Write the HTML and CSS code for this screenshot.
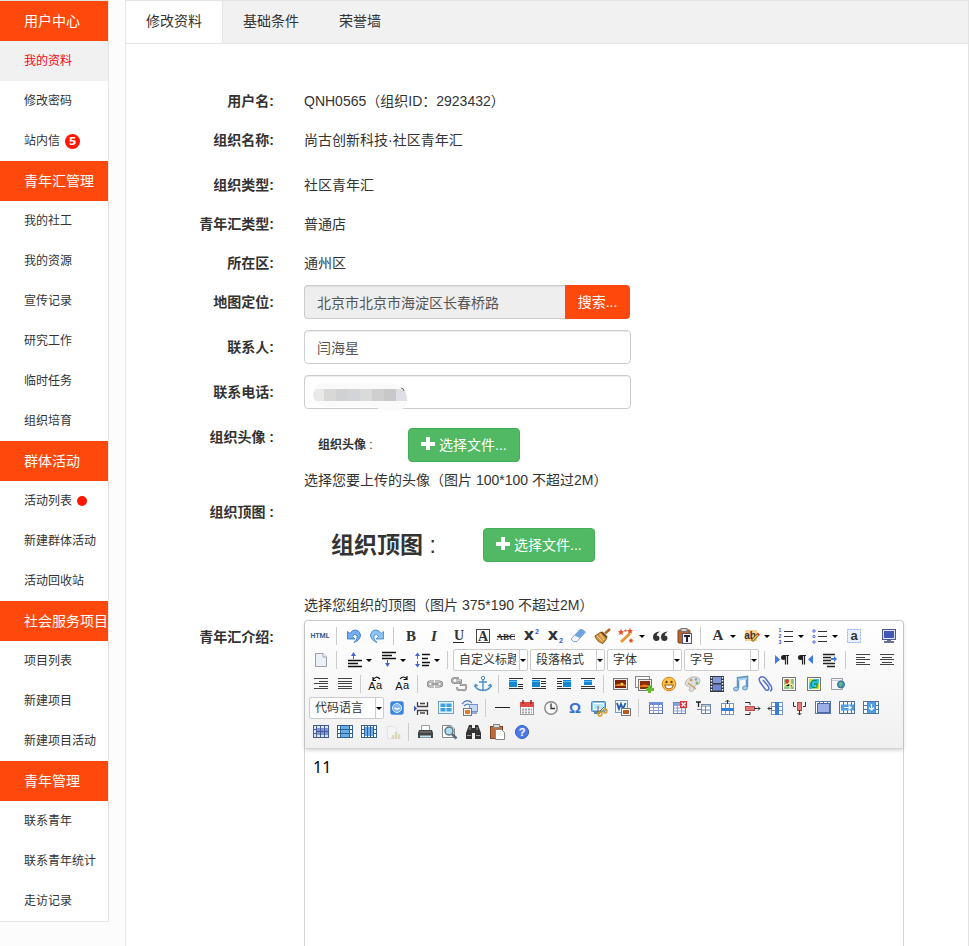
FILE: index.html
```
<!DOCTYPE html>
<html lang="zh-CN">
<head>
    <meta charset="UTF-8">
    <meta name="viewport" content="width=device-width, initial-scale=1.0">
    <title>用户中心 - 修改资料</title>
    <link rel="stylesheet" href="styles.css">
</head>
<body>
    <nav class="sidebar">
        <h2>用户中心</h2>
        <a href="#" class="active">我的资料</a>
        <a href="#">修改密码</a>
        <a href="#">站内信<span class="badge">5</span></a>
        <h2>青年汇管理</h2>
        <a href="#">我的社工</a>
        <a href="#">我的资源</a>
        <a href="#">宣传记录</a>
        <a href="#">研究工作</a>
        <a href="#">临时任务</a>
        <a href="#">组织培育</a>
        <h2>群体活动</h2>
        <a href="#">活动列表<span class="dot"></span></a>
        <a href="#">新建群体活动</a>
        <a href="#">活动回收站</a>
        <h2>社会服务项目</h2>
        <a href="#">项目列表</a>
        <a href="#">新建项目</a>
        <a href="#">新建项目活动</a>
        <h2>青年管理</h2>
        <a href="#">联系青年</a>
        <a href="#">联系青年统计</a>
        <a href="#">走访记录</a>
    </nav>

    <main class="panel">
        <div class="tabs">
            <a href="#" class="tab current">修改资料</a>
            <a href="#" class="tab">基础条件</a>
            <a href="#" class="tab">荣誉墙</a>
        </div>

        <form class="profile-form">
            <div class="row">
                <span class="label">用户名:</span>
                <div class="value">QNH0565（组织ID：2923432）</div>
            </div>
            <div class="row tall">
                <span class="label">组织名称:</span>
                <div class="value">尚古创新科技·社区青年汇</div>
            </div>
            <div class="row">
                <span class="label">组织类型:</span>
                <div class="value">社区青年汇</div>
            </div>
            <div class="row">
                <span class="label">青年汇类型:</span>
                <div class="value">普通店</div>
            </div>
            <div class="row">
                <span class="label">所在区:</span>
                <div class="value">通州区</div>
            </div>
            <div class="row">
                <label class="label" for="address">地图定位:</label>
                <div class="field input-group">
                    <input type="text" id="address" class="text-input" value="北京市北京市海淀区长春桥路" readonly>
                    <button type="button" class="btn-search">搜索...</button>
                </div>
            </div>
            <div class="row">
                <label class="label" for="contact">联系人:</label>
                <div class="field"><input type="text" id="contact" class="text-input" value="闫海星"></div>
            </div>
            <div class="row">
                <label class="label" for="phone">联系电话:</label>
                <div class="field">
                    <input type="text" id="phone" class="text-input">
                    <svg class="phone-mask" width="96" height="30" viewBox="0 0 96 30">
                        <path d="M9 1H72Q92 1 95 15Q95 29 80 29Q68 29 62 25H14Q0 22 0 12Q1 2 9 1Z" fill="#fafafa"/>
                        <path d="M3 7H11V19H3Q-3 13 3 7Z" fill="#e9e9e9"/>
                        <path d="M11 7H23V19H11Z" fill="#d8d8d7"/>
                        <path d="M23 7H35V19H23Z" fill="#d0d1d2"/>
                        <path d="M35 7H47V19H35Z" fill="#d3d4d7"/>
                        <path d="M47 7H59V19H47Z" fill="#dadada"/>
                        <path d="M59 7H71V19H59Z" fill="#cfcfcf"/>
                        <path d="M71 7H83V19H71Z" fill="#c8c8c8"/>
                        <path d="M83 7H91Q94 12 94 19H83Z" fill="#dedfe2"/>
                        <path d="M88 6Q91 6 91 9" fill="none" stroke="#667788"/>
                    </svg>
                </div>
            </div>
            <div class="row upload">
                <span class="label">组织头像 :</span>
                <div class="content">
                    <div class="picker">
                        <div class="preview avatar-preview">组织头像<span> :</span></div>
                        <button type="button" class="btn-file"><svg width="14" height="14" viewBox="0 0 14 14"><path d="M5 0h4v5h5v4H9v4H5V9H0V5h5z" fill="#fff"/></svg>选择文件...</button>
                    </div>
                    <div class="hint">选择您要上传的头像（图片 100*100 不超过2M）</div>
                </div>
            </div>
            <div class="row upload">
                <span class="label">组织顶图 :</span>
                <div class="content">
                    <div class="picker">
                        <div class="preview banner-preview">组织顶图<span> :</span></div>
                        <button type="button" class="btn-file"><svg width="14" height="14" viewBox="0 0 14 14"><path d="M5 0h4v5h5v4H9v4H5V9H0V5h5z" fill="#fff"/></svg>选择文件...</button>
                    </div>
                    <div class="hint">选择您组织的顶图（图片 375*190 不超过2M）</div>
                </div>
            </div>
            <div class="row intro">
                <label class="label" for="intro">青年汇介绍:</label>
                <div class="editor">
                    <div class="toolbar">
                        <div class="tool-row">
                            <button type="button" title="源代码"><svg viewBox="0 0 20 20"><text x="10" y="12" class="t-html">HTML</text></svg></button>
                            <i class="sep"></i>
                            <button type="button" title="撤销"><svg viewBox="0 0 20 20"><path d="M4.500 5.500V13H12L9.500 10.500Q11.500 7.500 13.500 9Q15.500 12 11 16.500Q17.500 14 17.500 9Q16.500 4 12 4Q9 4 7 7.500Z" fill="#72aef0" stroke="#2f70c0" stroke-width=".8"/></svg></button>
                            <button type="button" title="重做"><svg viewBox="0 0 20 20"><path d="M16.500 5.500V13H9L11.500 10.500Q9.500 7.500 7.500 9Q5.500 12 10 16.500Q3.500 14 3.500 9Q4.500 4 9 4Q12 4 14 7.500Z" fill="#8cc4f4" stroke="#3a80c8" stroke-width=".8"/></svg></button>
                            <i class="sep"></i>
                            <button type="button" title="加粗"><svg viewBox="0 0 20 20"><text x="11" y="15" class="t-serif">B</text></svg></button>
                            <button type="button" title="斜体"><svg viewBox="0 0 20 20"><text x="10" y="15" class="t-serif t-italic">I</text></svg></button>
                            <button type="button" title="下划线"><svg viewBox="0 0 20 20"><text x="11" y="14" class="t-serif t-mid">U</text><path d="M5 16.500H16" stroke="#222"/></svg></button>
                            <button type="button" title="字符边框"><svg viewBox="0 0 20 20"><rect x="4.500" y="3.500" width="13" height="13" fill="none" stroke="#444"/><text x="11" y="15" class="t-serif t-mid">A</text></svg></button>
                            <button type="button" title="删除线"><svg viewBox="0 0 20 20"><text x="10" y="14" class="t-abc">ABC</text><path d="M1 10.500H19" stroke="#222"/></svg></button>
                            <button type="button" title="上标"><svg viewBox="0 0 20 20"><text x="9" y="14" class="t-x">x</text><text x="17" y="8" class="t-num">2</text></svg></button>
                            <button type="button" title="下标"><svg viewBox="0 0 20 20"><text x="9" y="14" class="t-x">x</text><text x="17" y="17" class="t-num">2</text></svg></button>
                            <button type="button" title="清除格式"><svg viewBox="0 0 20 20"><path d="M3 13L12 3.500Q14 2.500 17.500 6L9 15.500Q5 17 3 13Z" fill="#f4f8fd" stroke="#88a6cb"/><path d="M6.500 9.500L12 3.500Q14 2.500 17.500 6L12 12Z" fill="#6ea2e4"/></svg></button>
                            <button type="button" title="格式刷"><svg viewBox="0 0 20 20"><path d="M18 3L13 7.500" stroke="#b06b20" stroke-width="2.500"/><path d="M9 6L15 12L11 17.500Q5 16 3 10Z" fill="#d89642" stroke="#8e5518"/><path d="M5 10L10 15M8 8L12 14" stroke="#f7d38e"/><path d="M9.500 6L15 11.500" stroke="#6b4b22" stroke-width="2"/></svg></button>
                            <button type="button" class="wide" title="自动排版"><svg viewBox="0 0 20 20"><path d="M5 16L14 7.500" stroke="#e39a36" stroke-width="3"/><path d="M5 3l1 2 2 .5-1.500 1.500.5 2-2-1-2 1 .5-2L2 5.500 4 5zM14 2l1 2 2 .3-1.500 1.400.4 2-1.900-1-1.900 1 .4-2L11 4.300l2-.3zM15 12l.8 1.600 1.700.3-1.200 1.200.2 1.900-1.500-.9-1.500.9.2-1.900-1.200-1.200 1.700-.3zM9.500 3l.5 1 1 .2-.7.800.1 1.100-.9-.5-1 .5.200-1.100-.8-.8 1.100-.2z" fill="#e8502b"/></svg><b class="caret"></b></button>
                            <button type="button" title="引用"><svg viewBox="0 0 20 20"><path d="M10 5.500Q3 6 3 11Q3 15 6.500 15Q9.500 15 9.500 12Q9.500 9.500 6.500 9.500Q7 7 10 5.500ZM18 5.500Q11 6 11 11Q11 15 14.500 15Q17.500 15 17.500 12Q17.500 9.500 14.500 9.500Q15 7 18 5.500Z" fill="#333"/></svg></button>
                            <button type="button" title="纯文本粘贴"><svg viewBox="0 0 20 20"><rect x="4" y="4" width="12" height="13" rx="1" fill="#b5662d" stroke="#7c421b"/><rect x="7" y="2.500" width="6" height="3" fill="#d5d5d5" stroke="#777"/><rect x="8.500" y="7.500" width="9" height="10" fill="#f3f6fa" stroke="#557"/><path d="M10 10H16M13 10V16" stroke="#223" stroke-width="2"/></svg></button>
                            <i class="sep"></i>
                            <button type="button" class="wide" title="字体颜色"><svg viewBox="0 0 20 20"><text x="11" y="14" class="t-serif">A</text></svg><b class="caret"></b></button>
                            <button type="button" class="wide" title="背景色"><svg viewBox="0 0 20 20"><rect x="4" y="4" width="12" height="11" fill="#ffd08a"/><text x="9" y="13" class="t-ab">ab</text><path d="M11 15L17.500 8" stroke="#6a542d" stroke-width="3"/><path d="M11.500 14.500L17 8.500" stroke="#f5ca4c" stroke-width="1.500"/><path d="M16.500 9L18 7.500" stroke="#dc4a3a" stroke-width="3"/></svg><b class="caret"></b></button>
                            <button type="button" class="wide" title="有序列表"><svg viewBox="0 0 20 20"><path d="M9 5.500H18M9 10.500H18M9 15.500H18" stroke="#333"/><text x="5" y="6" class="t-list">1</text><text x="5" y="12" class="t-list">2</text><text x="5" y="18" class="t-list">3</text></svg><b class="caret"></b></button>
                            <button type="button" class="wide" title="无序列表"><svg viewBox="0 0 20 20"><path d="M9 5.500H18M9 10.500H18M9 15.500H18" stroke="#333"/><g fill="#fff" stroke="#4a62e0"><circle cx="5" cy="5" r="1.200"/><circle cx="5" cy="10.500" r="1.200"/><circle cx="5" cy="16" r="1.200"/></g></svg><b class="caret"></b></button>
                            <button type="button" title="全选"><svg viewBox="0 0 20 20"><rect x="4.500" y="3.500" width="13" height="13" fill="#e9f1ff" stroke="#8aaefb" stroke-dasharray="2 1"/><text x="11" y="14" class="t-a">a</text></svg></button>
                            <button type="button" class="push" title="全屏"><svg viewBox="0 0 20 20"><rect x="3.500" y="3.500" width="13" height="10" fill="#dfe4f2" stroke="#4d5789"/><rect x="5" y="5" width="10" height="7" fill="#3f57b5"/><path d="M8 14H12V15H15V17H5V15H8Z" fill="#687197"/></svg></button>
                        </div>
                        <div class="tool-row">
                            <button type="button" title="清空文档"><svg viewBox="0 0 20 20"><path d="M5.500 3.500H13L16.500 7V16.500H5.500Z" fill="#edf0f6" stroke="#9aa1ad"/><path d="M13 3.500V7H16.500" fill="#fff" stroke="#9aa1ad"/></svg></button>
                            <i class="sep"></i>
                            <button type="button" class="wide" title="段前距"><svg viewBox="0 0 20 20"><path d="M5 10.500H19M5 13.500H15M5 16.500H19" stroke="#111" stroke-width="1.300"/><path d="M10.500 9V4" stroke="#4464c8"/><path d="M8 6L10.500 2L13 6Z" fill="#4464c8"/></svg><b class="caret"></b></button>
                            <button type="button" class="wide" title="段后距"><svg viewBox="0 0 20 20"><path d="M5 2.500H19M5 5.500H15M5 8.500H19" stroke="#111" stroke-width="1.300"/><path d="M10.500 10V14" stroke="#4464c8"/><path d="M8 13L10.500 17L13 13Z" fill="#4464c8"/></svg><b class="caret"></b></button>
                            <button type="button" class="wide" title="行间距"><svg viewBox="0 0 20 20"><path d="M11 4.500H19M11 8.500H17M11 12.500H19M11 15.500H18" stroke="#111" stroke-width="1.300"/><path d="M6.500 5V15" stroke="#4464c8" stroke-dasharray="4 2"/><path d="M4 6L6.500 2.500L9 6ZM4 14L6.500 17.500L9 14Z" fill="#4464c8"/></svg><b class="caret"></b></button>
                            <i class="sep"></i>
                            <span class="combo"><select aria-label="自定义标题"><option>自定义标题</option></select></span>
                            <span class="combo"><select aria-label="段落格式"><option>段落格式</option></select></span>
                            <span class="combo"><select aria-label="字体"><option>字体</option></select></span>
                            <span class="combo"><select aria-label="字号"><option>字号</option></select></span>
                            <i class="sep"></i>
                            <button type="button" title="从左向右"><svg viewBox="0 0 20 20"><path d="M4 5L9 9.500L4 14Z" fill="#3f78e8"/><path d="M18 5.500H13M14.500 6V14.500M16.500 6V14.500" stroke="#222" stroke-width="1.200"/><circle cx="12.500" cy="7.500" r="2.500" fill="#222"/></svg></button>
                            <button type="button" title="从右向左"><svg viewBox="0 0 20 20"><path d="M18 5L13 9.500L18 14Z" fill="#3f78e8"/><path d="M11 5.500H6M7.500 6V14.500M9.500 6V14.500" stroke="#222" stroke-width="1.200"/><circle cx="5.500" cy="7.500" r="2.500" fill="#222"/></svg></button>
                            <button type="button" title="首行缩进"><svg viewBox="0 0 20 20"><path d="M4 4.500H16M4 7.500H12M4 10.500H12M4 13.500H16M8 16.500H16" stroke="#222" stroke-width="1.500"/><path d="M12 9H16" stroke="#3f78e8" stroke-width="2"/><path d="M15 6L18 9L15 12Z" fill="#3f78e8"/></svg></button>
                            <i class="sep"></i>
                            <button type="button" title="居左对齐"><svg viewBox="0 0 20 20"><path d="M4 4.500H18M4 7.500H13M4 9.500H18M4 12.500H13M4 14.500H18" stroke="#444"/></svg></button>
                            <button type="button" title="居中对齐"><svg viewBox="0 0 20 20"><path d="M4 4.500H18M6 7.500H16M4 9.500H18M6 12.500H16M4 14.500H18" stroke="#444"/></svg></button>
                        </div>
                        <div class="tool-row">
                            <button type="button" title="居右对齐"><svg viewBox="0 0 20 20"><path d="M4 4.500H18M9 7.500H18M4 9.500H18M9 12.500H18M4 14.500H18" stroke="#444"/></svg></button>
                            <button type="button" title="两端对齐"><svg viewBox="0 0 20 20"><path d="M4 4.500H18M4 7.500H18M4 9.500H18M4 12.500H18M4 14.500H18" stroke="#444"/></svg></button>
                            <i class="sep"></i>
                            <button type="button" title="字母大写"><svg viewBox="0 0 20 20"><text x="5" y="16" class="t-case">A</text><text x="12" y="15" class="t-case">a</text><path d="M6 6Q9 1 13 5M6 3V6.500H9" fill="none" stroke="#111" stroke-width="1.200"/></svg></button>
                            <button type="button" title="字母小写"><svg viewBox="0 0 20 20"><text x="8" y="16" class="t-case">A</text><text x="15" y="15" class="t-case">a</text><path d="M9 5Q12 1 16 5M16 2V5.500H12.500" fill="none" stroke="#111" stroke-width="1.200"/></svg></button>
                            <i class="sep"></i>
                            <button type="button" title="超链接"><svg viewBox="0 0 20 20"><g fill="none"><path d="M10 7.500H6Q4 7.500 4 10T6 12.500H10M11 7.500H15Q18 7.500 18 10T15 12.500H11M7.500 10H14.500" stroke="#777" stroke-width="2.200"/><path d="M10 7.500H6Q4 7.500 4 10T6 12.500H10M11 7.500H15Q18 7.500 18 10T15 12.500H11M7.500 10H14.500" stroke="#ddd" stroke-width=".8"/></g></svg></button>
                            <button type="button" title="取消链接"><svg viewBox="0 0 20 20"><g fill="none"><path d="M11 4H7Q4 4 4 6.500T7 9H11V7M8 6.500H13V11H17Q18.500 11 18 14T15 16H11Q9 16 9 13" stroke="#777" stroke-width="2"/><path d="M11 4H7Q4 4 4 6.500T7 9H11V7M8 6.500H13V11H17Q18.500 11 18 14T15 16H11Q9 16 9 13" stroke="#eee" stroke-width=".7"/></g></svg></button>
                            <button type="button" title="锚点"><svg viewBox="0 0 20 20"><path d="M11 6V17M7 8H15M3 11Q4 16 11 16.500Q18 16 19 11M2.500 13L3.500 10.500L6 12M16 12L18.500 10.500L19.500 13" fill="none" stroke="#4e8fc7" stroke-width="1.400"/><circle cx="11" cy="4" r="1.700" fill="#fff" stroke="#4e8fc7"/></svg></button>
                            <i class="sep"></i>
                            <button type="button" title="默认"><svg viewBox="0 0 20 20"><path d="M4 4.500H18M13 10.500H18M13 12.500H18M4 14.500H18" stroke="#333"/><rect x="4" y="6" width="8" height="7" fill="#1586d2"/><path d="M4 7.500H12" stroke="#52bdf3"/></svg></button>
                            <button type="button" title="左浮动"><svg viewBox="0 0 20 20"><path d="M3 4.500H17M12 7.500H17M12 9.500H17M12 12.500H17M3 14.500H17" stroke="#333"/><rect x="3" y="6" width="8" height="7" fill="#1586d2"/><path d="M3 7.500H11" stroke="#52bdf3"/></svg></button>
                            <button type="button" title="右浮动"><svg viewBox="0 0 20 20"><path d="M4 4.500H18M4 7.500H9M4 9.500H9M4 12.500H9M4 14.500H18" stroke="#333"/><rect x="10" y="6" width="8" height="7" fill="#1586d2"/><path d="M10 7.500H18" stroke="#52bdf3"/></svg></button>
                            <button type="button" title="居中"><svg viewBox="0 0 20 20"><path d="M4 4.500H18M4 12.500H18M4 14.500H18" stroke="#333"/><rect x="7" y="6" width="8" height="5" fill="#1586d2"/><path d="M7 7.500H15" stroke="#52bdf3"/></svg></button>
                            <i class="sep"></i>
                            <button type="button" title="单图上传"><svg viewBox="0 0 20 20"><rect x="3.500" y="4.500" width="14" height="11" fill="#eee" stroke="#777"/><rect x="5" y="6" width="11" height="8" fill="#7a2206"/><path d="M5 11Q10 8 16 11V12H5Z" fill="#ee7917"/><circle cx="12" cy="10" r="1.300" fill="#ffe06c"/></svg></button>
                            <button type="button" title="多图上传"><svg viewBox="0 0 20 20"><rect x="1.500" y="2.500" width="14" height="11" fill="#fff" stroke="#888"/><rect x="4.500" y="5.500" width="13" height="11" fill="#eee" stroke="#777"/><rect x="6" y="7" width="10" height="8" fill="#8a2d0b"/><path d="M6 12Q10 9 16 12V13H6Z" fill="#ee7917"/><path d="M14 11.500h3v2.500h3v3h-3v2h-3v-2h-2v-3h2z" fill="#69b933"/></svg></button>
                            <button type="button" title="表情"><svg viewBox="0 0 20 20"><circle cx="11" cy="10" r="6.800" fill="#ffc545" stroke="#dc8122"/><circle cx="8.500" cy="8" r="1.200" fill="#69401a"/><circle cx="13.500" cy="8" r="1.200" fill="#69401a"/><path d="M6.500 11H15.500Q14.500 15 11 15T6.500 11Z" fill="#fff" stroke="#a35c1a"/></svg></button>
                            <button type="button" title="涂鸦"><svg viewBox="0 0 20 20"><path d="M10 3Q18 2 18 7Q18 11 14 11Q12 12 12 16Q8 19 7 16Q9 12 5 12Q2 11 4 7Q6 4 10 3Z" fill="#e0dedb" stroke="#bbb"/><circle cx="9" cy="6" r="1.300" fill="#d98b4a"/><circle cx="14" cy="5.500" r="1.300" fill="#68a9d4"/><circle cx="15" cy="9" r="1.300" fill="#78b25b"/><path d="M6 9L14 15" stroke="#c6a06a" stroke-width="1.500"/></svg></button>
                            <button type="button" title="视频"><svg viewBox="0 0 20 20"><rect x="4" y="2" width="14" height="16" fill="#333945"/><rect x="7" y="3" width="8" height="6" fill="#8398d8"/><rect x="7" y="10.500" width="8" height="6" fill="#6f88d0"/><path d="M5.500 3V18M16.500 3V18" stroke="#fff" stroke-width="1.500" stroke-dasharray="1.500 1.500"/></svg></button>
                            <button type="button" title="音乐"><svg viewBox="0 0 20 20"><path d="M8 14V4L17 3V13" fill="none" stroke="#6196c5" stroke-width="2.500"/><path d="M8 5.500L17 4.500" stroke="#a9d5f2" stroke-width="2"/><ellipse cx="6" cy="15" rx="2.500" ry="2" fill="#a6cff0" stroke="#6196c5"/><ellipse cx="15" cy="14" rx="2.500" ry="2" fill="#a6cff0" stroke="#6196c5"/></svg></button>
                            <button type="button" title="附件"><svg viewBox="0 0 20 20"><path d="M9 6L14 12Q16 15 14 16T11 15L6 8Q4 4 7 3T12 5L17 12Q19 16 16 17" fill="none" stroke="#5871cc" stroke-width="1.500"/></svg></button>
                            <button type="button" title="Baidu地图"><svg viewBox="0 0 20 20"><rect x="4.500" y="3.500" width="13" height="13" fill="#fff" stroke="#777"/><rect x="6" y="5" width="10" height="10" fill="#8cc68b"/><path d="M6 12L11 9L16 12M12 5V15" stroke="#f7eb93" stroke-width="1.500"/><path d="M9 10Q5 6 9 5Q13 6 9 10Z" fill="#d9332f"/></svg></button>
                            <button type="button" title="Google地图"><svg viewBox="0 0 20 20"><rect x="5.500" y="3.500" width="13" height="13" fill="#fff" stroke="#777"/><rect x="7" y="5" width="10" height="10" fill="#2cc0ee"/><path d="M7 5H12L7 10ZM17 15H10L17 9Z" fill="#d2e428"/><path d="M15 7Q9 5 9 10T15 13V10H12" fill="none" stroke="#108a58" stroke-width="1.300"/></svg></button>
                            <button type="button" title="插入Iframe"><svg viewBox="0 0 20 20"><path d="M5.500 4.500H16.500V15.500H5.500Z" fill="#f5f5f7" stroke="#9a9fa8"/><path d="M6 6.500H16" stroke="#c8ccd4"/><circle cx="15" cy="10.500" r="3.500" fill="#4194bd" stroke="#336d94"/><path d="M13 9Q15 7 16 9T14 13Z" fill="#68bd75"/></svg></button>
                        </div>
                        <div class="tool-row">
                            <span class="combo"><select aria-label="代码语言"><option>代码语言</option></select></span>
                            <button type="button" title="百度应用"><svg viewBox="0 0 20 20"><rect x="3.500" y="3.500" width="13" height="13" rx="2" fill="#3984df" stroke="#6fa4e4"/><circle cx="10" cy="10" r="4.500" fill="#7fb8f4" stroke="#e1f0ff"/><path d="M7.500 10Q10 12 12.500 10" fill="none" stroke="#fff" stroke-width="1.500"/></svg></button>
                            <button type="button" title="分页"><svg viewBox="0 0 20 20"><path d="M6.500 4V8.500H16.500V4M6.500 17V12.500H16.500V17M9 5.500H14M9 15H14" fill="none" stroke="#444" stroke-width="1.300"/><path d="M3 7.500L6 10.500L3 13.500Z" fill="#3c5bb9"/></svg></button>
                            <button type="button" title="模板"><svg viewBox="0 0 20 20"><rect x="3.500" y="3.500" width="15" height="12" fill="#eaf4fd" stroke="#719fc8"/><path d="M5.500 5.500H10.500V9H5.500ZM11.500 5.500H16.500V9H11.500ZM5.500 10H10.500V13.500H5.500ZM11.500 10H16.500V13.500H11.500Z" fill="#3e9ee0"/></svg></button>
                            <button type="button" title="背景"><svg viewBox="0 0 20 20"><path d="M3 6Q8 0 13 5M5 8Q8 5 11 7" fill="none" stroke="#5d83bd" stroke-width="1.300"/><rect x="10.500" y="6.500" width="8" height="7" fill="#c3d7f6" stroke="#7892c3"/><path d="M13 14H18V16H13Z" fill="#92a6c8"/><rect x="4.500" y="10.500" width="8" height="7" fill="#fff" stroke="#777"/><rect x="6" y="12" width="5" height="4" fill="#e67b26"/></svg></button>
                            <i class="sep"></i>
                            <button type="button" title="分隔线"><svg viewBox="0 0 20 20"><path d="M3 9.500H18" stroke="#222"/></svg></button>
                            <button type="button" title="日期"><svg viewBox="0 0 20 20"><rect x="4.500" y="4.500" width="13" height="12" fill="#fff" stroke="#999"/><rect x="4" y="4" width="14" height="5" fill="#df4a45"/><path d="M7 2V6M15 2V6" stroke="#a42222" stroke-width="1.500"/><path d="M6 11.500H16M6 14.500H16" stroke="#a1a1a1" stroke-width="2" stroke-dasharray="2 1"/></svg></button>
                            <button type="button" title="时间"><svg viewBox="0 0 20 20"><circle cx="11" cy="10" r="6.200" fill="#f7f7f7" stroke="#888" stroke-width="1.400"/><path d="M11 5.500V10.500H15" fill="none" stroke="#333" stroke-width="1.300"/></svg></button>
                            <button type="button" title="特殊字符"><svg viewBox="0 0 20 20"><text x="11" y="15" class="t-omega">Ω</text></svg></button>
                            <button type="button" title="截图"><svg viewBox="0 0 20 20"><rect x="3.500" y="3.500" width="14" height="10" rx="1" fill="#80bfe9" stroke="#5b87aa"/><path d="M5.500 5.500H15.500V11.500H5.500Z" fill="#bce4fa" stroke="#fff"/><path d="M6 15H12" stroke="#5b87aa" stroke-width="2"/><path d="M10 8V14M16 9L10 15" stroke="#666"/><circle cx="12" cy="16" r="2" fill="none" stroke="#d59b24" stroke-width="1.300"/><circle cx="17" cy="13" r="2" fill="none" stroke="#d59b24" stroke-width="1.300"/></svg></button>
                            <button type="button" title="图片转存"><svg viewBox="0 0 20 20"><rect x="3.500" y="2.500" width="12" height="12" fill="#f2f8ff" stroke="#6c9cd2"/><path d="M5 5L7 11L9 6L11 11L13.500 5" fill="none" stroke="#215fa9" stroke-width="1.800"/><rect x="9.500" y="10.500" width="9" height="7" fill="#fff" stroke="#777"/><rect x="11" y="12" width="6" height="4" fill="#ba5c21"/></svg></button>
                            <i class="sep"></i>
                            <button type="button" title="插入表格"><svg viewBox="0 0 20 20"><rect x="4.500" y="4.500" width="13" height="11" fill="#fff" stroke="#5975ba"/><rect x="4" y="4" width="14" height="3" fill="#6f91dc"/><path d="M5 9.500H17M5 12.500H17M8.500 7V15M13.500 7V15" stroke="#8ba1d8"/></svg></button>
                            <button type="button" title="删除表格"><svg viewBox="0 0 20 20"><rect x="4.500" y="4.500" width="12" height="11" fill="#fff" stroke="#6d84bd"/><rect x="5" y="5" width="8" height="3" fill="#86a2e2"/><path d="M5 10H16M5 13H16M8.500 8V15M12.500 10V15" stroke="#8ba1d8"/><rect x="11" y="3" width="7" height="7" fill="#e22f34"/><path d="M12.500 4.500L16.500 8.500M16.500 4.500L12.500 8.500" stroke="#fff" stroke-width="1.300"/></svg></button>
                            <button type="button" title="表格前插入行"><svg viewBox="0 0 20 20"><path d="M3 4H8M5.500 4V9" stroke="#222" stroke-width="1.300"/><rect x="8.500" y="6.500" width="9" height="9" fill="#fff" stroke="#7185b0"/><path d="M9 8H18M9 12H17M12.500 8V15M4 11.500H8" stroke="#7185b0"/></svg></button>
                            <button type="button" title="前插入行"><svg viewBox="0 0 20 20"><rect x="4.500" y="5.500" width="12" height="11" fill="#fff" stroke="#7894ca"/><path d="M8.500 6V16M12.500 6V16" stroke="#7894ca"/><rect x="4" y="10" width="13" height="3" fill="#357fd9"/><path d="M10.500 6V2M8.500 4L10.500 2L12.500 4" fill="none" stroke="#333"/></svg></button>
                            <button type="button" title="删除行"><svg viewBox="0 0 20 20"><path d="M4 4.500H9V7M4 16.500H9V14" fill="none" stroke="#333"/><rect x="4.500" y="8.500" width="9" height="4" fill="#e97a77" stroke="#b94b49"/><path d="M13 10.500H19M17 8.500L19 10.500L17 12.500" fill="none" stroke="#333"/></svg></button>
                            <button type="button" title="前插入列"><svg viewBox="0 0 20 20"><rect x="6.500" y="4.500" width="11" height="12" fill="#fff" stroke="#7894ca"/><path d="M7 8.500H17M7 12.500H17" stroke="#7894ca"/><rect x="10" y="4" width="4" height="13" fill="#357fd9"/><path d="M7 10.500H3M5 8.500L3 10.500L5 12.500" fill="none" stroke="#333"/></svg></button>
                            <button type="button" title="删除列"><svg viewBox="0 0 20 20"><path d="M4.500 4V8.500H7M16.500 4V8.500H14" fill="none" stroke="#333"/><rect x="8.500" y="4.500" width="4" height="8" fill="#e97a77" stroke="#b94b49"/><path d="M10.500 12V17M8.500 15L10.500 17L12.500 15" fill="none" stroke="#333"/></svg></button>
                            <button type="button" title="合并多个单元格"><svg viewBox="0 0 20 20"><rect x="2.500" y="3.500" width="15" height="12" fill="#fff" stroke="#5875aa"/><path d="M6.500 4V7M10.500 4V7M14.500 4V7" stroke="#5875aa"/><rect x="4.500" y="5.500" width="12" height="9" fill="#9baee6" stroke="#4e65aa"/></svg></button>
                            <button type="button" title="右合并单元格"><svg viewBox="0 0 20 20"><rect x="2.500" y="3.500" width="15" height="12" fill="#fff" stroke="#4c749f"/><path d="M6.500 4V15M10.500 4V15M14.500 4V15" stroke="#4c749f"/><rect x="4" y="6.500" width="13" height="6" fill="#4f9ce7"/><path d="M7 9.500H14M11.500 7.500L14 9.500L11.500 11.500" fill="none" stroke="#fff" stroke-width="1.200"/></svg></button>
                            <button type="button" title="下合并单元格"><svg viewBox="0 0 20 20"><rect x="2.500" y="3.500" width="15" height="12" fill="#fff" stroke="#4c749f"/><path d="M3 7.500H17M3 11.500H17M6.500 4V15M14.500 4V15" stroke="#4c749f"/><rect x="6.500" y="4" width="8" height="11" fill="#4f9ce7"/><path d="M10.500 6V12M8 9.500L10.500 12L13 9.500" fill="none" stroke="#fff" stroke-width="1.200"/></svg></button>
                        </div>
                        <div class="tool-row">
                            <button type="button" title="拆分单元格"><svg viewBox="0 0 20 20"><rect x="3.500" y="3.500" width="15" height="12" fill="#dfe6fa" stroke="#435b97"/><path d="M4 7.500H18M4 11.500H18" stroke="#435b97"/><rect x="6" y="6" width="12" height="7" fill="#8094da"/><path d="M6.500 4V15M10.500 4V15M14.500 4V15M6 9.500H18" stroke="#435b97"/></svg></button>
                            <button type="button" title="拆分成行"><svg viewBox="0 0 20 20"><rect x="3.500" y="3.500" width="15" height="12" fill="#fff" stroke="#315f92"/><path d="M4 7.500H18M4 11.500H18" stroke="#315f92"/><rect x="6" y="4" width="10" height="11" fill="#66adeb"/><path d="M6.500 4V15M15.500 4V15M6 7.500H16M6 11.500H16" stroke="#315f92"/></svg></button>
                            <button type="button" title="拆分成列"><svg viewBox="0 0 20 20"><rect x="3.500" y="3.500" width="15" height="12" fill="#fff" stroke="#315f92"/><path d="M4 7.500H18M4 11.500H18" stroke="#315f92"/><rect x="6" y="5" width="10" height="9" fill="#66adeb"/><path d="M6.500 4V15M9.500 4V15M12.500 4V15M15.500 4V15" stroke="#315f92"/></svg></button>
                            <button type="button" title="图表" disabled><svg viewBox="0 0 20 20" opacity=".3"><path d="M5.500 4.500H12L14.500 7V16.500H5.500Z" fill="#fff" stroke="#bbb"/><path d="M11 17V13M17 17V12" stroke="#d6933f" stroke-width="2.500"/><path d="M14 17V10" stroke="#7fb04a" stroke-width="2.500"/></svg></button>
                            <i class="sep"></i>
                            <button type="button" title="打印"><svg viewBox="0 0 20 20"><path d="M6.500 3.500H14.500V9H6.500Z" fill="#fff" stroke="#999"/><path d="M4 8H17L18 11V16H3V11Z" fill="#444"/><path d="M5 10H16" stroke="#888"/><path d="M5 14.500H16" stroke="#c1e3f5" stroke-width="2"/></svg></button>
                            <button type="button" title="预览"><svg viewBox="0 0 20 20"><path d="M3.500 3.500H12L15.500 7V15.500H3.500Z" fill="#fff" stroke="#888"/><circle cx="10" cy="9" r="4" fill="#aee0f5" stroke="#60717e" stroke-width="1.500"/><path d="M13 12L17.500 16.500" stroke="#5c6979" stroke-width="2.500"/></svg></button>
                            <button type="button" title="查询替换"><svg viewBox="0 0 20 20"><path d="M6 3H9V6H12V3H15L18 11V17H12V11H9V17H3V11Z" fill="#333"/><path d="M4 13.500H8M13 13.500H17M7 5V8M14 5V8" stroke="#999"/></svg></button>
                            <button type="button" title="从草稿箱加载"><svg viewBox="0 0 20 20"><rect x="3.500" y="4.500" width="12" height="12" fill="#b96d3c" stroke="#804221"/><rect x="6.500" y="2.500" width="6" height="3" fill="#ddd" stroke="#888"/><path d="M8.500 7.500H14.500L17.500 10.500V17.500H8.500Z" fill="#fff" stroke="#888"/></svg></button>
                            <button type="button" title="帮助"><svg viewBox="0 0 20 20"><circle cx="11" cy="10" r="6.500" fill="#4c7be8" stroke="#3158c4"/><text x="11" y="14" class="t-help">?</text></svg></button>
                        </div>
                    </div>
                    <textarea id="intro">11</textarea>
                </div>
            </div>
        </form>
    </main>
</body>
</html>
```
FILE: styles.css
```
* {
    box-sizing: border-box;
}

body {
    margin: 0;
    min-height: 100vh;
    display: flex;
    align-items: flex-start;
    gap: 16px;
    padding-right: 1px;
    background-color: #fcfcfc;
    color: #333;
    font-family: "Liberation Sans", "Noto Sans CJK SC", sans-serif;
    font-size: 14px;
    line-height: 20px;
}

a {
    color: #333;
    text-decoration: none;
}

button,
input,
select,
textarea {
    font-family: inherit;
    font-size: 14px;
}

/* left menu */
.sidebar {
    flex: none;
    width: 109px;
    background-color: #fff;
    border: 1px solid #e5e5e5;
    border-left: none;
}

.sidebar h2 {
    margin: 0;
    padding-left: 24px;
    background-color: #ff490c;
    color: #fff;
    font-size: 14px;
    font-weight: normal;
    line-height: 40px;
    white-space: nowrap;
}

.sidebar a {
    display: flex;
    align-items: center;
    height: 40px;
    padding-left: 24px;
    font-size: 12px;
    white-space: nowrap;
}

.sidebar a.active {
    background-color: #f1f1f1;
    color: #ff0012;
}

.badge {
    width: 15px;
    height: 15px;
    margin-left: 5px;
    border-radius: 8px;
    background-color: #ff1500;
    color: #fff;
    font-family: "DejaVu Sans", sans-serif;
    font-size: 11px;
    font-weight: bold;
    line-height: 15px;
    text-align: center;
}

.dot {
    width: 10px;
    height: 10px;
    margin-left: 5px;
    border-radius: 50%;
    background-color: #ff1500;
}

/* main panel */
.panel {
    flex: 1;
    display: flex;
    flex-direction: column;
    min-height: 100vh;
    background-color: #fff;
    border: 1px solid #e5e5e5;
    border-bottom: none;
}

.tabs {
    display: flex;
    background-color: #f1f1f1;
    border-bottom: 1px solid #e5e5e5;
}

.tab {
    padding: 0 20px 2px;
    line-height: 40px;
}

.tab.current {
    background-color: #fff;
    border-right: 1px solid #e5e5e5;
}

.profile-form {
    flex: 1;
    display: flex;
    flex-direction: column;
    padding-top: 40px;
}

.row {
    display: flex;
    gap: 30px;
    min-height: 28px;
    margin-bottom: 11px;
}

.row.tall {
    min-height: 34px;
}

.row.upload {
    margin-bottom: 5px;
}

.label {
    flex: none;
    width: 148px;
    padding-top: 7px;
    font-weight: bold;
    text-align: right;
}

.value {
    padding-top: 7px;
}

.field {
    position: relative;
    width: 327px;
}

.text-input {
    display: block;
    width: 100%;
    height: 34px;
    padding: 6px 12px;
    border: 1px solid #ccc;
    border-radius: 4px;
    background-color: #fff;
    box-shadow: inset 0 1px 1px rgba(0, 0, 0, 0.075);
    color: #555;
}

.input-group {
    display: flex;
    padding-right: 1px;
}

.input-group .text-input {
    flex: 1;
    width: auto;
    min-width: 0;
    border-right: none;
    border-radius: 4px 0 0 4px;
    background-color: #eee;
}

.btn-search {
    width: 65px;
    padding: 0 0 2px;
    border: none;
    border-radius: 0 4px 4px 0;
    background-color: #ff490c;
    color: #fff;
}

.phone-mask {
    position: absolute;
    left: 9px;
    top: 7px;
}

.picker {
    display: flex;
    align-items: center;
}

.preview {
    display: flex;
    align-items: center;
    font-weight: bold;
    white-space: pre;
}

.preview span {
    font-weight: normal;
}

.avatar-preview {
    width: 104px;
    height: 50px;
    padding-left: 14px;
    font-size: 12px;
}

.banner-preview {
    width: 179px;
    height: 100px;
    padding-left: 27px;
    font-size: 23px;
}

.btn-file {
    display: flex;
    align-items: center;
    gap: 4px;
    height: 34px;
    padding: 0 12px 2px;
    border: 1px solid #44ae56;
    border-radius: 4px;
    background-color: #51b963;
    color: #fff;
}

/* rich text editor */
.row.intro {
    flex: 1;
    margin-bottom: 0;
}

.editor {
    display: flex;
    flex-direction: column;
    width: 600px;
    border: 1px solid #d4d4d4;
    border-bottom: none;
    border-radius: 4px 4px 0 0;
    background-color: #fff;
}

.toolbar {
    padding: 3px 2px 4px 3px;
    border-bottom: 1px solid #d4d4d4;
    border-radius: 4px 4px 0 0;
    background-image: linear-gradient(#fff, #f0f0f0);
    box-shadow: 0 1px 4px rgba(0, 0, 0, 0.2);
}

.tool-row {
    display: flex;
    align-items: center;
    height: 24px;
}

.tool-row button {
    display: flex;
    align-items: center;
    width: 24px;
    height: 24px;
    padding: 0 2px;
    border: none;
    background: none;
}

.tool-row button.wide {
    width: 34px;
}

.tool-row button.push {
    margin-left: auto;
}

.tool-row svg {
    flex: none;
    width: 20px;
    height: 20px;
}

.caret {
    flex: none;
    margin-left: 3px;
    border: 3px solid transparent;
    border-top-color: #000;
    border-bottom: none;
}

.sep {
    flex: none;
    width: 1px;
    height: 18px;
    margin: 0 4px;
    background-color: #ccc;
}

.combo {
    position: relative;
    width: 75px;
    height: 22px;
    margin: 0 1px;
    border: 1px solid #ccc;
    border-radius: 2px;
    background-color: #fff;
}

.combo select {
    display: block;
    width: 66px;
    height: 20px;
    padding: 0 3px 0 5px;
    border: none;
    border-right: 1px solid #ccc;
    background: none;
    appearance: none;
    color: #333;
    font-size: 12px;
}

.combo::after {
    content: "";
    position: absolute;
    right: 1px;
    top: 9px;
    border: 3px solid transparent;
    border-top-color: #000;
    border-bottom: none;
}

.editor textarea {
    flex: 1;
    width: 100%;
    padding: 8px;
    border: none;
    outline: none;
    resize: none;
    background: none;
    color: #000;
    font-family: "Noto Sans", "Noto Sans CJK SC", sans-serif;
    font-size: 16px;
    line-height: 20px;
}

/* letters inside the toolbar icons */
.tool-row text {
    fill: #333;
    font-weight: bold;
    text-anchor: middle;
}

.tool-row .t-html {
    fill: #2f5f90;
    font-family: Roboto, sans-serif;
    font-size: 7px;
}

.t-serif {
    font-family: "Liberation Serif", serif;
    font-size: 15px;
}

.t-mid {
    font-size: 14px;
}

.t-italic {
    font-style: italic;
}

.t-abc {
    font-family: "Liberation Serif", serif;
    font-size: 9px;
}

.t-x {
    font-family: "DejaVu Sans", sans-serif;
    font-size: 16px;
}

.tool-row .t-num {
    fill: #3b50d8;
    font-size: 7px;
}

.tool-row .t-list {
    fill: #3b50d8;
    font-size: 5px;
}

.t-ab {
    font-size: 10px;
}

.t-a {
    font-size: 13px;
}

.tool-row .t-case {
    fill: #111;
    font-size: 11px;
    font-weight: normal;
}

.tool-row .t-omega {
    fill: #3c6fd0;
    font-size: 15px;
}

.tool-row .t-help {
    fill: #fff;
    font-size: 11px;
}
```
